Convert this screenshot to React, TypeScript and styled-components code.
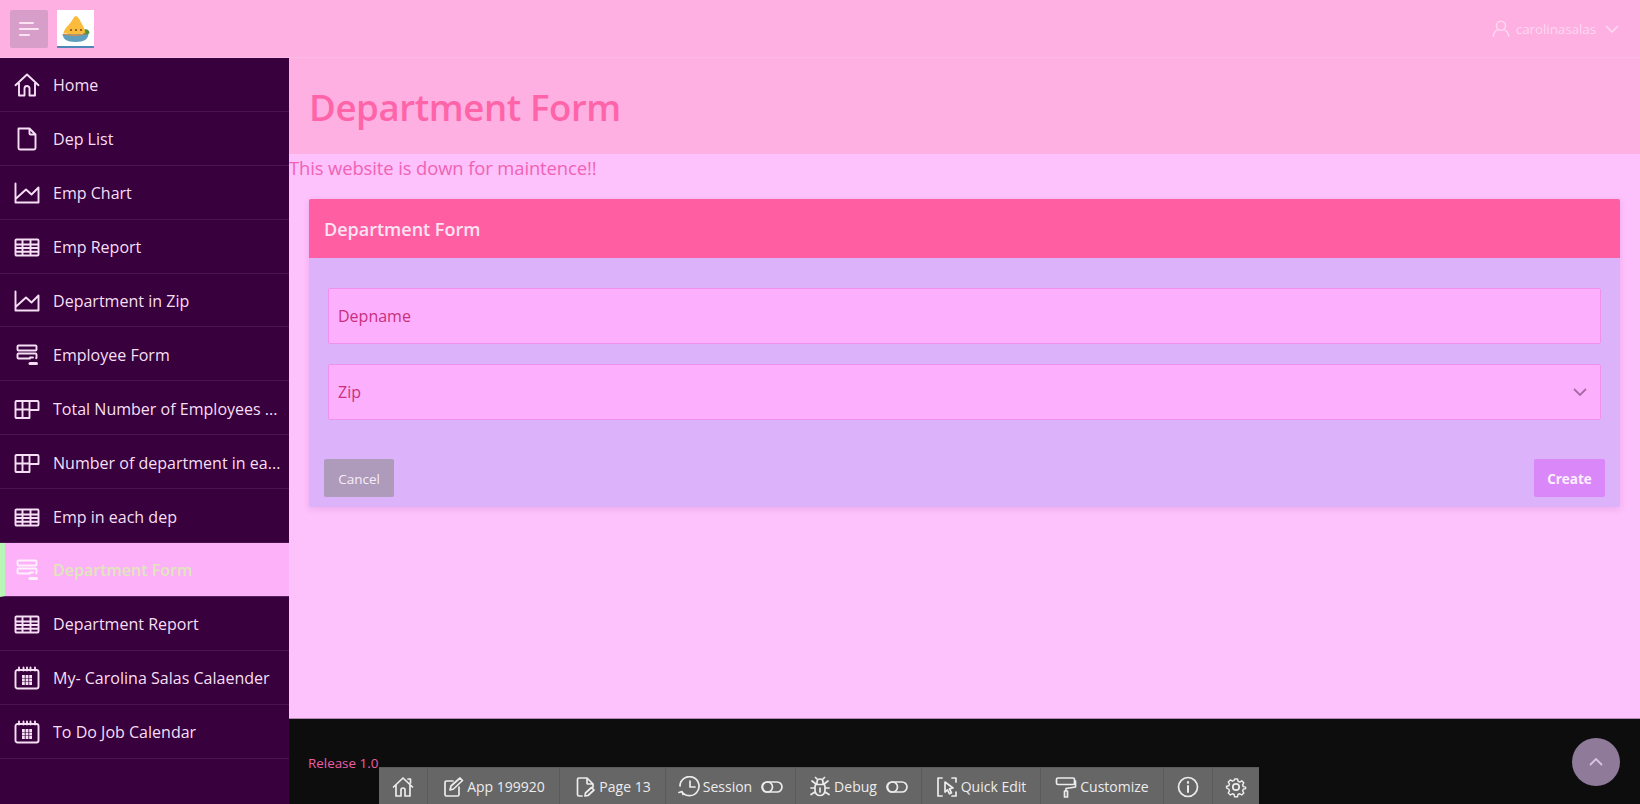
import React from "react";
import styled, { createGlobalStyle } from "styled-components";

const Global = createGlobalStyle`
  html, body { margin: 0; padding: 0; height: 100%; }
  body { font-family: "Open Sans", "Noto Sans", "Liberation Sans", sans-serif; background: #fdc1fb; overflow: hidden; }
  * { box-sizing: border-box; }
`;

const Shell = styled.div`
  position: relative;
  width: 1640px;
  height: 804px;
  display: grid;
  grid-template-rows: 58px 1fr;
  overflow: hidden;
`;
const TopBar = styled.header`
  display: flex;
  align-items: center;
  padding: 0 21px 0 10px;
  background: #feb0e3;
  border-bottom: 1px solid #fbbbe7;
`;
const MenuButton = styled.button`
  width: 38px;
  height: 38px;
  border: 0;
  padding: 0;
  border-radius: 2px;
  background: #d69ec9;
  display: flex;
  align-items: center;
  justify-content: center;
`;
const Logo = styled.div`
  width: 37px;
  height: 38px;
  margin-left: 9px;
  background: #fff;
  border-bottom: 2px solid #4f86b8;
  display: flex;
`;
const UserMenu = styled.div`
  margin-left: auto;
  display: flex;
  align-items: center;
  gap: 6px;
  color: #fdd7f0;
  font-size: 13.5px;
  letter-spacing: -0.1px;
`;
const Body = styled.div`
  display: grid;
  grid-template-columns: 289px 1fr;
  min-height: 0;
`;
const Side = styled.nav`
  background: #38003c;
  display: flex;
  flex-direction: column;
`;
const NavItem = styled.div<{ $active?: boolean }>`
  height: 53.9px;
  flex: none;
  display: flex;
  align-items: center;
  padding: 2px 0 0 ${(p) => (p.$active ? "9px" : "14px")};
  border-left: ${(p) => (p.$active ? "5px solid #b9f6b6" : "0")};
  border-bottom: 1px solid ${(p) => (p.$active ? "#5b1f63" : "#4b1450")};
  background: ${(p) => (p.$active ? "#fcb1f9" : "transparent")};
  color: ${(p) => (p.$active ? "#e0e6b9" : "#f6dff5")};
  font-size: 16.05px;
  font-weight: ${(p) => (p.$active ? 600 : 400)};
  white-space: nowrap;
`;
const NavIconSlot = styled.span`
  width: 26px;
  height: 26px;
  margin-right: 13px;
  flex: none;
  display: flex;
  align-items: center;
  justify-content: center;
`;
const Main = styled.main`
  display: flex;
  flex-direction: column;
  min-width: 0;
`;
const TitleBand = styled.div`
  height: 96px;
  flex: none;
  display: flex;
  align-items: center;
  padding: 2px 0 0 20px;
  background: #feb0e3;
`;
const Title = styled.h1`
  margin: 0;
  color: #ff64a8;
  font-size: 36.6px;
  font-weight: 600;
  letter-spacing: -0.4px;
`;
const Notice = styled.div`
  color: #f063b4;
  font-size: 18.4px;
  line-height: 28px;
  height: 45px;
  letter-spacing: -0.1px;
`;
const Content = styled.div`
  flex: 1;
  padding: 0 20px;
`;
const Card = styled.section`
  border-radius: 2px;
  overflow: hidden;
  background: #dcb3fb;
  box-shadow: 0 2px 6px rgba(120, 60, 140, 0.14);
`;
const CardHead = styled.div`
  height: 59px;
  display: flex;
  align-items: center;
  padding: 1px 0 0 15px;
  background: #ff5fa2;
  color: #fde4f3;
  font-size: 18px;
  font-weight: 600;
`;
const CardBody = styled.div`
  padding: 30px 19px 0;
  display: flex;
  flex-direction: column;
  gap: 20px;
`;
const Field = styled.div`
  height: 56px;
  display: flex;
  align-items: center;
  justify-content: space-between;
  padding: 0 13px 0 9px;
  background: #fcaffc;
  border: 1px solid #ee92ee;
  border-radius: 2px;
  color: #c92f7c;
  font-size: 16px;
`;
const Actions = styled.div`
  display: flex;
  justify-content: space-between;
  padding: 39px 15px 10px;
`;
const ActionButton = styled.button<{ $primary?: boolean }>`
  width: ${(p) => (p.$primary ? "71px" : "70px")};
  height: 38px;
  border: 0;
  border-radius: 2px;
  padding: 1px 0 0;
  font-family: inherit;
  font-size: 13.5px;
  font-weight: ${(p) => (p.$primary ? 700 : 400)};
  color: ${(p) => (p.$primary ? "#fdf0fd" : "#f8ecfa")};
  background: ${(p) => (p.$primary ? "#d987f9" : "#ae9bbb")};
`;
const Footer = styled.footer`
  height: 86px;
  flex: none;
  display: flex;
  align-items: center;
  padding: 2px 20px 0 19px;
  background: #0d0d0d;
  border-top: 1px solid #b488b4;
  color: #ee5da6;
  font-size: 13.4px;
`;
const ScrollTop = styled.div`
  position: absolute;
  left: 1572px;
  top: 738px;
  width: 48px;
  height: 48px;
  border-radius: 50%;
  background: #8f7a9a;
  display: flex;
  align-items: center;
  justify-content: center;
`;
const DevBar = styled.div`
  position: absolute;
  left: 379px;
  bottom: 0;
  height: 37px;
  display: flex;
  background: #666;
  border-top: 1px solid #5c5c5c;
  color: #ececec;
  font-size: 14px;
`;
const DevItem = styled.div<{ $w: number }>`
  width: ${(p) => p.$w}px;
  display: flex;
  align-items: center;
  justify-content: center;
  gap: 3px;
  padding-top: 1px;
  white-space: nowrap;
  & + & { border-left: 1px solid #5a5a5a; }
`;
const ToggleWrap = styled.span`
  display: flex;
  margin-left: 6px;
`;

const Toggle = () => (
  <ToggleWrap>
    <svg width="22" height="12" viewBox="0 0 22 12" fill="none" stroke="#ececec" strokeWidth="1.700">
      <rect x="1" y="1" width="20" height="10" rx="5" />
      <circle cx="6.500" cy="6" r="5" />
    </svg>
  </ToggleWrap>
);

type Stroke = { size?: number; color?: string; sw?: number; vb?: string; h?: number; children: React.ReactNode };
const Ico = ({ size = 26, h, color = "#f6dff5", sw = 1.9, vb = "0 0 26 26", children }: Stroke) => (
  <svg width={size} height={h ?? size} viewBox={vb} fill="none" stroke={color} strokeWidth={sw} strokeLinejoin="round" strokeLinecap="round" style={{ flex: "none" }}>
    {children}
  </svg>
);

const icons: Record<string, (c: string) => React.ReactNode> = {
  home: (c) => <Ico color={c}><path d="M1.500 13.200 13 2.500l11.500 10.700M5 11v12.500h5.500v-7a2.500 2.500 0 0 1 5 0v7H21V11" /></Ico>,
  file: (c) => <Ico color={c}><path d="M4.500 2.500h11l6 6V22a1.500 1.500 0 0 1-1.500 1.500H6A1.500 1.500 0 0 1 4.500 22zM15.500 2.500v5a1 1 0 0 0 1 1h5" /></Ico>,
  chart: (c) => <Ico color={c}><path d="M1.500 3.500v19h23V7.500l-7 7-5.500-5-10.500 9.500" /></Ico>,
  table: (c) => <Ico color={c}><path d="M1.500 6.500a1 1 0 0 1 1-1h21a1 1 0 0 1 1 1v14a1 1 0 0 1-1 1h-21a1 1 0 0 1-1-1zM1.500 10.500h23M1.500 14h23M1.500 17.700h23M8.500 5.500v16M16.500 5.500v16" /></Ico>,
  form: (c) => <Ico color={c}><path d="M4.500 3.500h17a1 1 0 0 1 1 1v3a1 1 0 0 1-1 1h-17a1 1 0 0 1-1-1v-3a1 1 0 0 1 1-1zM16 16.500H4.500a1 1 0 0 1-1-1v-3a1 1 0 0 1 1-1h17a1 1 0 0 1 1 1v3a1 1 0 0 1-.4.800" /><path d="M16 21.500h6.500" strokeWidth="3" /><path d="M16 15.500h3" /></Ico>,
  grid: (c) => <Ico color={c}><path d="M1.500 6a1 1 0 0 1 1-1h21a1 1 0 0 1 1 1v8h-9v8H2.500a1 1 0 0 1-1-1zM1.500 13.500h14M8.500 5v17M15.500 5v17" /></Ico>,
  cal: (c) => <Ico color={c}><path d="M3.500 5h19a2 2 0 0 1 2 2v14.500a2 2 0 0 1-2 2h-19a2 2 0 0 1-2-2V7a2 2 0 0 1 2-2z" /><path d="M5 2.500v3M9.500 2.500v3M13 2.500v3M16.500 2.500v3M21 2.500v3" /><path d="M8 11.500h2.800M11.600 11.500h2.800M15.200 11.500h2.800M8 15h2.800M11.600 15h2.800M15.200 15h2.800M8 18.500h2.800M11.600 18.500h2.800M15.200 18.500h2.800" strokeWidth="2.800" strokeLinecap="butt" /></Ico>,
};

const items: [string, string][] = [
  ["home", "Home"],
  ["file", "Dep List"],
  ["chart", "Emp Chart"],
  ["table", "Emp Report"],
  ["chart", "Department in Zip"],
  ["form", "Employee Form"],
  ["grid", "Total Number of Employees ..."],
  ["grid", "Number of department in ea..."],
  ["table", "Emp in each dep"],
  ["form", "Department Form"],
  ["table", "Department Report"],
  ["cal", "My- Carolina Salas Calaender"],
  ["cal", "To Do Job Calendar"],
];

const SmallIco = ({ children, w = 22 }: { children: React.ReactNode; w?: number }) => (
  <Ico size={w} h={22} vb={`0 0 ${w} 22`} color="#ececec" sw={1.7}>{children}</Ico>
);

export default function App() {
  return (
    <Shell>
      <Global />
      <TopBar>
        <MenuButton aria-label="menu">
          <svg width="20" height="16" viewBox="0 0 20 16" fill="none" stroke="#fbe3f4" strokeWidth="2" strokeLinecap="round">
            <path d="M1 2h13M1 8h18M1 14h9" />
          </svg>
        </MenuButton>
        <Logo>
          <svg width="37" height="36" viewBox="0 0 37 36">
            <path d="M5.500 24h26c-.5 5-4 8-13 8s-12.500-3-13-8z" fill="#5f9fbd" />
            <path d="M26 20c3-1.500 6-1 6.500 3-2 2-5 2-6.500 1z" fill="#4c8f3c" />
            <path d="M19 6c2 .5 3.500 3 5 6.500 2 3 3.500 6.500 4.500 10-6 2.500-15 2.500-22 .5 1-4.500 4.500-7 7.500-11 2-2.500 3-6 5-6z" fill="#fbbb3c" />
            <path d="M13 20h2M18 20h2M23 20h2" stroke="#7a4a1a" strokeWidth="1.300" />
            <path d="M6.500 24c7 2 15 1.700 22-.5" stroke="#e3863a" strokeWidth="1.200" fill="none" />
          </svg>
        </Logo>
        <UserMenu>
          <svg width="18" height="19" viewBox="0 0 20 20" fill="none" stroke="#fdd7f0" strokeWidth="1.700" strokeLinecap="round">
            <circle cx="10" cy="7" r="5" />
            <path d="M1.500 18.500c.5-4 3-6.500 5.500-7.500M18.500 18.500c-.5-4-3-6.500-5.500-7.500" />
          </svg>
          <span>carolinasalas</span>
          <svg width="14" height="8" viewBox="0 0 14 8" fill="none" stroke="#fdd7f0" strokeWidth="1.700" style={{ marginLeft: 3 }}>
            <path d="M1 1l6 6 6-6" />
          </svg>
        </UserMenu>
      </TopBar>
      <Body>
        <Side>
          {items.map(([ic, label]) => {
            const active = label === "Department Form";
            return (
              <NavItem key={label} $active={active}>
                <NavIconSlot>{icons[ic](active ? "#fff0fb" : "#f6dff5")}</NavIconSlot>
                {label}
              </NavItem>
            );
          })}
        </Side>
        <Main>
          <TitleBand>
            <Title>Department Form</Title>
          </TitleBand>
          <Notice>This website is down for maintence!!</Notice>
          <Content>
            <Card>
              <CardHead>Department Form</CardHead>
              <CardBody>
                <Field>Depname</Field>
                <Field>
                  Zip
                  <svg width="14" height="8" viewBox="0 0 14 8" fill="none" stroke="#a86aa4" strokeWidth="1.800">
                    <path d="M1 1l6 6 6-6" />
                  </svg>
                </Field>
              </CardBody>
              <Actions>
                <ActionButton>Cancel</ActionButton>
                <ActionButton $primary>Create</ActionButton>
              </Actions>
            </Card>
          </Content>
          <Footer>Release 1.0</Footer>
        </Main>
      </Body>
      <ScrollTop>
        <svg width="14" height="8" viewBox="0 0 14 8" fill="none" stroke="#d9c7df" strokeWidth="1.800">
          <path d="M1 7l6-6 6 6" />
        </svg>
      </ScrollTop>
      <DevBar>
        <DevItem $w={48}>
          <SmallIco><path d="M1.500 11 11 2l9.500 9M4 9v11h5v-6a2 2 0 0 1 4 0v6h5V9M16 3h2.500v4" /></SmallIco>
        </DevItem>
        <DevItem $w={132}>
          <SmallIco><path d="M17 11v7.500a1.500 1.500 0 0 1-1.500 1.500h-11A1.500 1.500 0 0 1 3 18.500v-12A1.500 1.500 0 0 1 4.500 5H11M8 14l1-4 9-8 2.500 2.500-9 8.500z" /></SmallIco>
          App 199920
        </DevItem>
        <DevItem $w={106}>
          <SmallIco><path d="M8 20H5a1.500 1.500 0 0 1-1.500-1.500v-15A1.500 1.500 0 0 1 5 2h8l6 6v3M13 2v5a1 1 0 0 0 1 1h5M11 20l.5-3 6-5.500 2.500 2.500-6 5.500z" /></SmallIco>
          Page 13
        </DevItem>
        <DevItem $w={130}>
          <SmallIco><path d="M4 16a9.500 9.500 0 1 0-2-6M1 16.500l3-1 1 3M12 5v6h5" /></SmallIco>
          Session
          <Toggle />
        </DevItem>
        <DevItem $w={126}>
          <SmallIco><path d="M7 8.500h8a2.500 2.500 0 0 1 1 2v4a5 5 0 0 1-10 0v-4a2.500 2.500 0 0 1 1-2zM8 8.500V6a3 3 0 0 1 6 0v2.500M11 12v4M6 12H2M20 12h-4M6 16l-4 2.500M16 16l4 2.500M7 8 3 5M15 8l4-3M8 3 6.500 1.500M14 3l1.500-1.500" /></SmallIco>
          Debug
          <Toggle />
        </DevItem>
        <DevItem $w={119}>
          <SmallIco><path d="M6 2H2v18h4M16 2h4v4M20 16v4h-4M9 6l8 6-3.500.8 2 4-2 1-2-4L9 16z" /></SmallIco>
          Quick Edit
        </DevItem>
        <DevItem $w={123}>
          <SmallIco><path d="M3 2h15a1.500 1.500 0 0 1 1.500 1.500V7A1.500 1.500 0 0 1 18 8.500H3A1.500 1.500 0 0 1 1.500 7V3.500A1.500 1.500 0 0 1 3 2zM19.500 5h1v6L11 12.500V15M9.500 15h3v6h-3z" /></SmallIco>
          Customize
        </DevItem>
        <DevItem $w={49}>
          <SmallIco><circle cx="11" cy="11" r="9.500" /><path d="M11 10v6" strokeWidth="2" /><path d="M11 6.200v.6" strokeWidth="2.200" /></SmallIco>
        </DevItem>
        <DevItem $w={47}>
          <SmallIco><circle cx="11" cy="11" r="3.200" /><path d="M9.300 1.500h3.400l.6 2.700 2 .9 2.400-1.400 2.400 2.400-1.400 2.400.8 2 2.700.6v1.800l-2.700.7-.8 2 1.400 2.300-2.400 2.400-2.400-1.400-2 .9-.6 2.700H9.300l-.6-2.700-2-.9-2.400 1.400-2.400-2.400 1.400-2.300-.8-2L-.2 11.900V10.100l2.700-.6.800-2L1.900 5.100l2.400-2.400 2.400 1.400 2-.9z" transform="translate(1.700 1.700) scale(.85)" /></SmallIco>
        </DevItem>
      </DevBar>
    </Shell>
  );
}
